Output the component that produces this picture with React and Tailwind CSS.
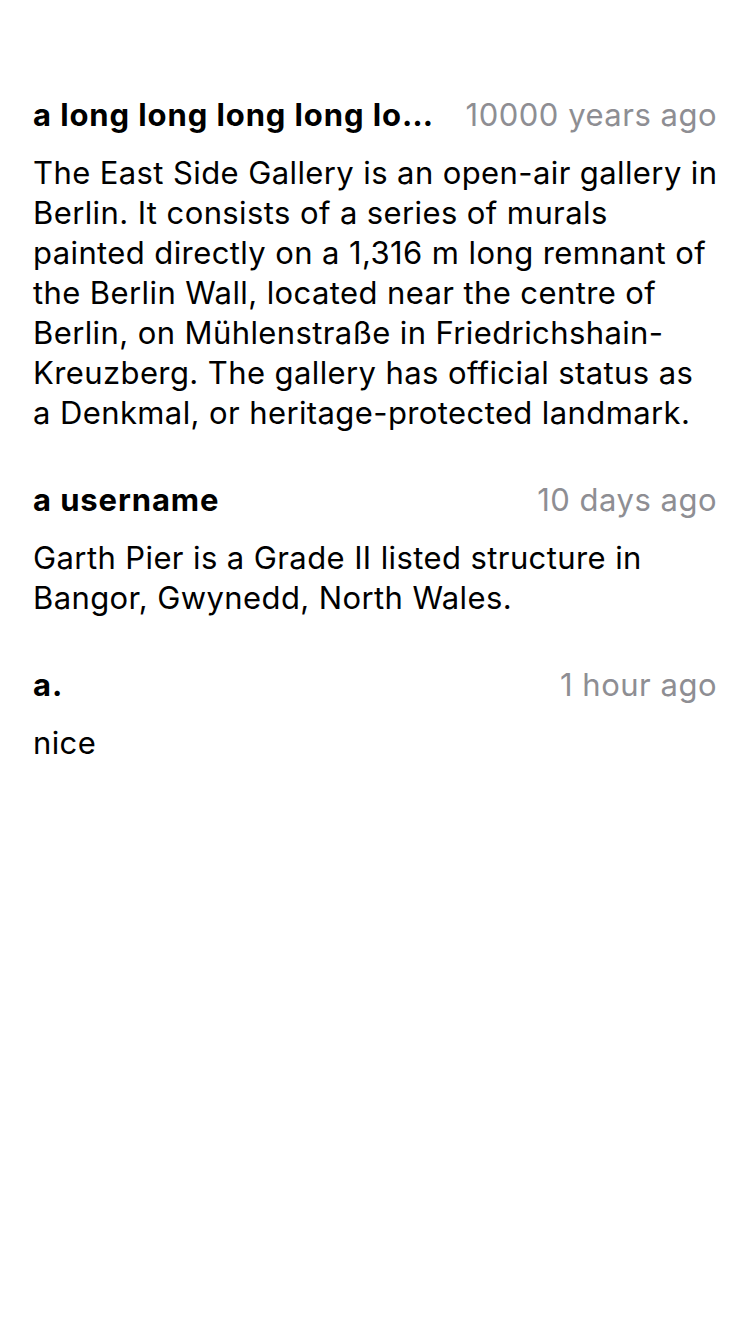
import React from 'react';

const comments = [
  {
    id: 1,
    user: 'a long long long long lo...',
    time: '10000 years ago',
    body: 'The East Side Gallery is an open-air gallery in Berlin. It consists of a series of murals painted directly on a 1,316 m long remnant of the Berlin Wall, located near the centre of Berlin, on Mühlenstraße in Friedrichshain-Kreuzberg. The gallery has official status as a\u00A0Denkmal, or heritage-protected landmark.',
  },
  {
    id: 2,
    user: 'a username',
    time: '10 days ago',
    body: 'Garth Pier is a Grade II listed structure in Bangor, Gwynedd, North Wales.',
  },
  {
    id: 3,
    user: 'a.',
    time: '1 hour ago',
    body: 'nice',
  },
];

const Comment = ({ user, time, body }) => (
  <div className="flex flex-col">
    <div className="flex items-center justify-between gap-[30px] h-[36px]">
      <span className="truncate font-bold text-[31px] tracking-[0.9px] text-black">{user}</span>
      <span className="shrink-0 text-[31px] tracking-[0.5px] text-[#8e8e93]">{time}</span>
    </div>
    <p className="mt-[20px] mr-[-8px] text-[31px] tracking-[0.4px] leading-[40px] text-black">{body}</p>
  </div>
);

export default function App() {
  return (
    <div
      className="min-h-[1334px] bg-white px-[33px] pt-[97px] flex flex-col gap-[49px]"
      style={{ fontFamily: 'Inter, "Noto Sans", sans-serif' }}
    >
      {comments.map((c) => (
        <Comment key={c.id} {...c} />
      ))}
    </div>
  );
}
